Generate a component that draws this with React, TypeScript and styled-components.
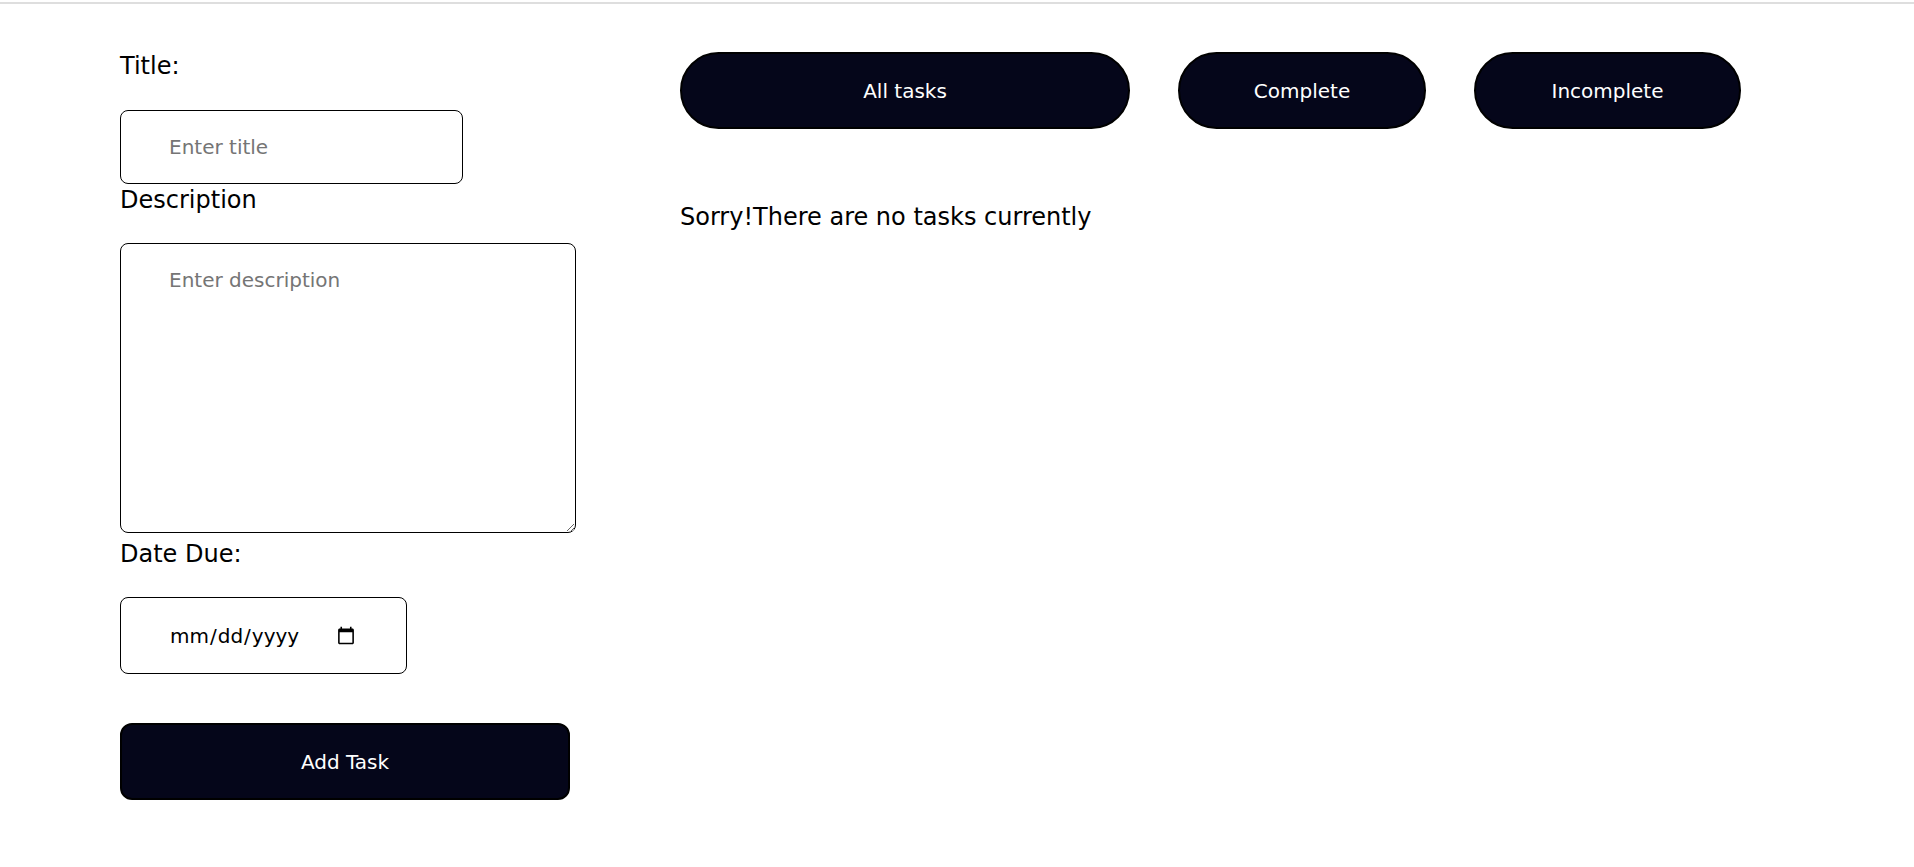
import React from "react";
import styled, { createGlobalStyle } from "styled-components";

const GlobalStyle = createGlobalStyle`
  html, body {
    margin: 0;
    padding: 0;
    background: #ffffff;
  }
  body {
    font-family: "DejaVu Sans", "Liberation Sans", sans-serif;
    color: #000000;
  }
  *, *::before, *::after {
    box-sizing: border-box;
  }
`;

const TopRule = styled.div`
  height: 2px;
  margin-top: 2px;
  background: #dedede;
`;

const Main = styled.main`
  display: flex;
  align-items: flex-start;
  gap: 104px;
  padding: 48px 0 0 120px;
`;

const Form = styled.form`
  display: flex;
  flex-direction: column;
  align-items: flex-start;
  width: 456px;
`;

const Label = styled.label<{ $mt?: number; $mb?: number }>`
  display: block;
  font-size: 24px;
  line-height: 29px;
  color: #000;
  margin: ${(p) => p.$mt ?? 0}px 0 ${(p) => p.$mb ?? 28}px;
`;

const Field = styled.input<{ $w: number; $h: number }>`
  display: block;
  width: ${(p) => p.$w}px;
  height: ${(p) => p.$h}px;
  margin: 0;
  padding: 0 48px;
  border: 1px solid #000;
  border-radius: 8px;
  background: #fff;
  color: #000;
  font-family: inherit;
  font-size: 20px;
  outline: none;

  &::placeholder {
    color: #757575;
  }
`;

const TextArea = styled.textarea`
  display: block;
  width: 456px;
  height: 290px;
  margin: 0;
  padding: 24px 48px;
  border: 1px solid #000;
  border-radius: 8px;
  background: #fff;
  color: #000;
  font-family: inherit;
  font-size: 20px;
  line-height: 24px;
  outline: none;

  &::placeholder {
    color: #757575;
  }
`;

const SubmitButton = styled.button`
  width: 450px;
  height: 77px;
  margin-top: 49px;
  border: 2px solid #000;
  border-radius: 12px;
  background: #05061a;
  color: #ffffff;
  font-family: inherit;
  font-size: 20px;
  cursor: pointer;
`;

const TaskPanel = styled.section`
  display: flex;
  flex-direction: column;
  align-items: flex-start;
`;

const FilterBar = styled.div`
  display: flex;
  gap: 48px;
`;

const FilterButton = styled.button<{ $w: number }>`
  width: ${(p) => p.$w}px;
  height: 77px;
  padding: 0;
  border: 2px solid #000;
  border-radius: 40px;
  background: #05061a;
  color: #ffffff;
  font-family: inherit;
  font-size: 20px;
  cursor: pointer;
`;

const EmptyMessage = styled.p`
  margin: 74px 0 0;
  font-size: 24px;
  line-height: 29px;
  color: #000;
`;

export default function App() {
  return (
    <>
      <GlobalStyle />
      <TopRule />
      <Main>
        <Form onSubmit={(e) => e.preventDefault()}>
          <Label htmlFor="title" $mb={29}>Title:</Label>
          <Field id="title" type="text" placeholder="Enter title" $w={343} $h={74} />
          <Label htmlFor="description" $mt={2}>Description</Label>
          <TextArea id="description" placeholder="Enter description" />
          <Label htmlFor="due" $mt={7}>Date Due:</Label>
          <Field id="due" type="date" $w={287} $h={77} />
          <SubmitButton type="submit">Add Task</SubmitButton>
        </Form>
        <TaskPanel>
          <FilterBar>
            <FilterButton type="button" $w={450}>All tasks</FilterButton>
            <FilterButton type="button" $w={248}>Complete</FilterButton>
            <FilterButton type="button" $w={267}>Incomplete</FilterButton>
          </FilterBar>
          <EmptyMessage>Sorry!There are no tasks currently</EmptyMessage>
        </TaskPanel>
      </Main>
    </>
  );
}
